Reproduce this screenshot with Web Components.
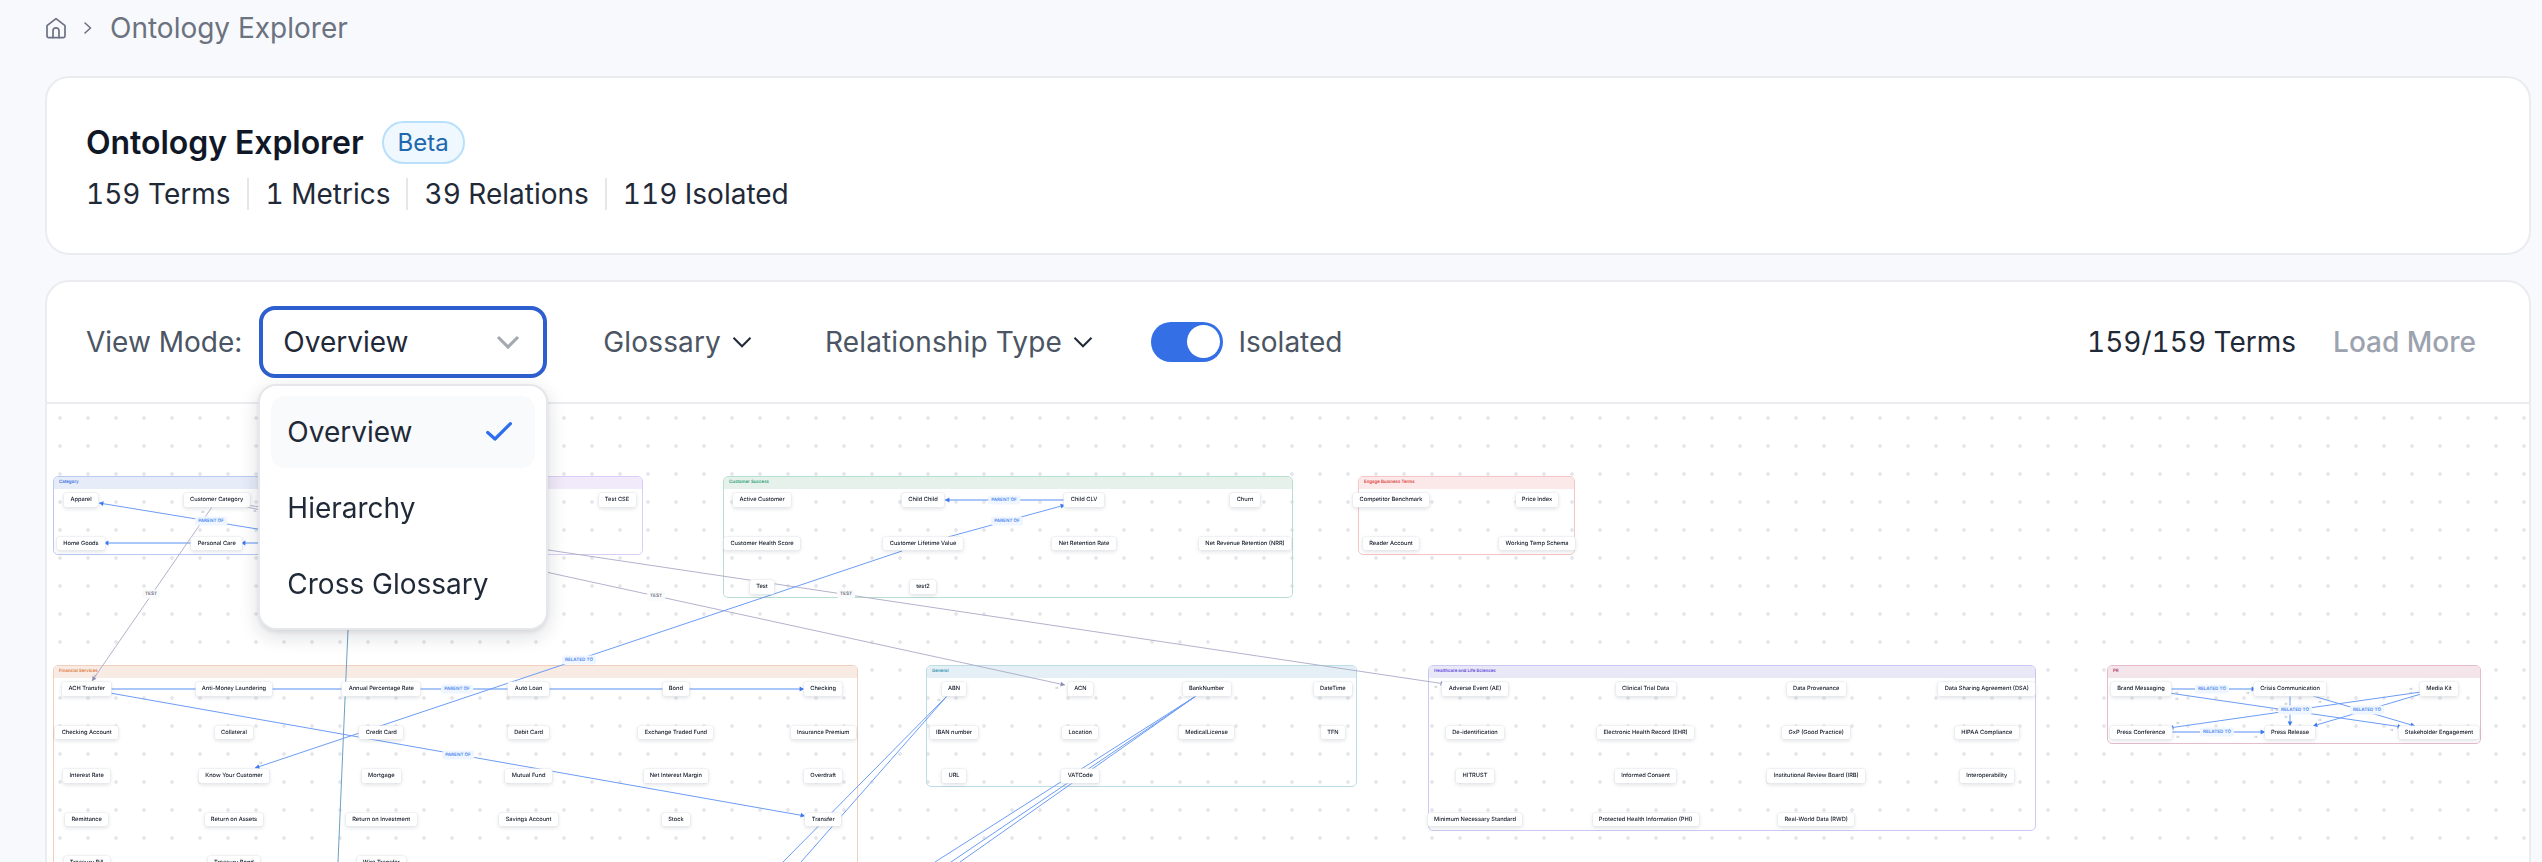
<!DOCTYPE html>
<html>
<head>
<meta charset="utf-8">
<title>Ontology Explorer</title>
<style>
  html, body { margin: 0; height: 862px; overflow: hidden; background: #f8f9fc; }
  body { font-family: Inter, "Liberation Sans", sans-serif; }
</style>
</head>
<body>
<app-shell>
  <bread-crumb label="Ontology Explorer"></bread-crumb>
  <summary-card>
    <span slot="title">Ontology Explorer</span>
    <span slot="badge">Beta</span>
    <stat-item>159 Terms</stat-item>
    <stat-item>1 Metrics</stat-item>
    <stat-item>39 Relations</stat-item>
    <stat-item>119 Isolated</stat-item>
  </summary-card>
  <explorer-card>
    <view-select slot="tools" value="Overview"></view-select>
    <filter-button slot="tools" style="margin-left:56px">Glossary</filter-button>
    <filter-button slot="tools" style="margin-left:66px">Relationship Type</filter-button>
    <toggle-switch slot="tools" style="margin-left:50.6px">Isolated</toggle-switch>
    <ontology-canvas></ontology-canvas>
  </explorer-card>
</app-shell>

<script>
const shell = document.createElement('template');
shell.innerHTML = `
<style>
  :host { display: flex; flex-direction: column; height: 862px; padding: 0 11px 0 45px; box-sizing: border-box; }
</style>
<slot></slot>`;
class AppShell extends HTMLElement {
  constructor() {
    super();
    this.attachShadow({ mode: 'open' }).appendChild(shell.content.cloneNode(true));
  }
}
customElements.define('app-shell', AppShell);

const crumb = document.createElement('template');
crumb.innerHTML = `
<style>
  :host { display: flex; align-items: center; height: 56px; margin-bottom: 20px; color: #6b7280; font-size: 28px; flex: none; }
  svg { display: block; flex: none; }
  .sep { margin: 0 17px 0 16px; }
</style>
<svg width="22" height="22" viewBox="0 0 22 22" fill="none" stroke="#6b7280" stroke-width="1.7" stroke-linejoin="round" stroke-linecap="round">
  <path d="M2 8.6 11 1.6l9 7V19a1.6 1.6 0 0 1-1.6 1.6H3.6A1.6 1.6 0 0 1 2 19z"/>
  <path d="M8 20.6v-6.8a3 3 0 0 1 6 0v6.8"/>
</svg>
<svg class="sep" width="10" height="12" viewBox="0 0 10 12" fill="none" stroke="#6b7280" stroke-width="1.6" stroke-linecap="round" stroke-linejoin="round"><path d="m2 1 5.5 5L2 11"/></svg>
<span></span>`;
class BreadCrumb extends HTMLElement {
  constructor() {
    super();
    this.attachShadow({ mode: 'open' }).appendChild(crumb.content.cloneNode(true));
    this.shadowRoot.querySelector('span').textContent = this.getAttribute('label');
  }
}
customElements.define('bread-crumb', BreadCrumb);

const summary = document.createElement('template');
summary.innerHTML = `
<style>
  :host { display: block; flex: none; background: #fff; border: 2px solid #eaecf0; border-radius: 24px; padding: 42px 39px 43px; height: 179px; box-sizing: border-box; }
  .head { display: flex; align-items: center; height: 44px; margin-bottom: 14px; }
  .title { font-size: 32px; font-weight: 600; color: #101828; letter-spacing: -0.05px; }
  .badge { margin-left: 18px; display: flex; align-items: center; height: 43px; padding: 0 14px; box-sizing: border-box; font-size: 24px; color: #2167ae; background: #eff8ff; border: 2px solid #b9e0fb; border-radius: 22px; }
  .stats { display: flex; height: 32px; align-items: center; }
</style>
<div class="head">
  <div class="title"><slot name="title"></slot></div>
  <div class="badge"><slot name="badge"></slot></div>
</div>
<div class="stats"><slot></slot></div>`;
class SummaryCard extends HTMLElement {
  constructor() {
    super();
    this.attachShadow({ mode: 'open' }).appendChild(summary.content.cloneNode(true));
  }
}
customElements.define('summary-card', SummaryCard);

const stat = document.createElement('template');
stat.innerHTML = `
<style>
  :host { display: flex; align-items: center; height: 32px; padding: 0 16px; font-size: 28px; color: #1f2937; border-left: 2px solid #e5e7eb; font-variant-numeric: tabular-nums; }
  :host(:first-of-type) { padding: 0 17px 0 0; border-left: 0; }
</style>
<slot></slot>`;
class StatItem extends HTMLElement {
  constructor() {
    super();
    this.attachShadow({ mode: 'open' }).appendChild(stat.content.cloneNode(true));
  }
}
customElements.define('stat-item', StatItem);

const explorer = document.createElement('template');
explorer.innerHTML = `
<style>
  :host { display: flex; flex-direction: column; flex: none; height: 640px; margin-top: 25px; background: #fff; border: 2px solid #eaecf0; border-radius: 24px; box-sizing: border-box; }
  .bar { position: relative; z-index: 5; flex: none; display: flex; align-items: center; height: 122px; box-sizing: border-box; padding: 0 53px 1px 39px; border-bottom: 2px solid #eaecf0; font-size: 28px; }
  .lead { color: #4b5563; margin-right: 17px; }
  .count { margin-left: auto; color: #1f2937; font-variant-numeric: tabular-nums; }
  .more { margin-left: 37px; color: #9ca3af; font-weight: 500; }
  .view { flex: none; height: 458px; }
</style>
<div class="bar">
  <span class="lead">View Mode:</span>
  <slot name="tools"></slot>
  <span class="count">159/159 Terms</span>
  <span class="more">Load More</span>
</div>
<div class="view"><slot></slot></div>`;
class ExplorerCard extends HTMLElement {
  constructor() {
    super();
    this.attachShadow({ mode: 'open' }).appendChild(explorer.content.cloneNode(true));
  }
}
customElements.define('explorer-card', ExplorerCard);

const select = document.createElement('template');
select.innerHTML = `
<style>
  :host { display: block; position: relative; flex: none; width: 288px; height: 72px; font-size: 28px; color: #1f2937; }
  .box { display: flex; align-items: center; justify-content: space-between; height: 100%; box-sizing: border-box; padding: 0 15px 0 20px; background: #fff; border: 4px solid #2d5fcf; border-radius: 16px; }
  .box svg { display: block; }
  .menu { position: absolute; left: -1px; top: 78px; width: 290px; height: 246px; box-sizing: border-box; padding: 10px 11px; background: #fff; border: 2px solid #e6e7ea; border-radius: 18px; box-shadow: 0 6px 20px rgba(16,24,40,.14), 0 2px 4px rgba(16,24,40,.08); display: flex; flex-direction: column; gap: 4px; }
  .item { flex: none; display: flex; align-items: center; justify-content: space-between; height: 72px; padding: 0 23px 0 16px; border-radius: 14px; }
  .on { background: #f9fafb; }
</style>
<div class="box">
  <span></span>
  <svg width="40" height="40" viewBox="0 0 24 24" fill="none" stroke="#a3a8b1" stroke-width="1.9"><path d="m6 9 6 6 6-6"/></svg>
</div>
<div class="menu">
  <div class="item on"><span>Overview</span>
    <svg width="26" height="19" viewBox="0 0 26 19" fill="none" stroke="#2f6fed" stroke-width="3.2" stroke-linecap="round" stroke-linejoin="round"><path d="M1.7 10.5 9 17 24.4 1.7"/></svg>
  </div>
  <div class="item"><span>Hierarchy</span></div>
  <div class="item"><span>Cross Glossary</span></div>
</div>`;
class ViewSelect extends HTMLElement {
  constructor() {
    super();
    this.attachShadow({ mode: 'open' }).appendChild(select.content.cloneNode(true));
    this.shadowRoot.querySelector('.box span').textContent = this.getAttribute('value');
  }
}
customElements.define('view-select', ViewSelect);

const filter = document.createElement('template');
filter.innerHTML = `
<style>
  :host { display: flex; align-items: center; flex: none; color: #4b5563; font-size: 28px; gap: 4px; letter-spacing: .15px; }
  svg { display: block; }
</style>
<slot></slot>
<svg width="34" height="34" viewBox="0 0 24 24" fill="none" stroke="#1f2937" stroke-width="1.4"><path d="m6 9 6 6 6-6"/></svg>`;
class FilterButton extends HTMLElement {
  constructor() {
    super();
    this.attachShadow({ mode: 'open' }).appendChild(filter.content.cloneNode(true));
  }
}
customElements.define('filter-button', FilterButton);

const toggle = document.createElement('template');
toggle.innerHTML = `
<style>
  :host { display: flex; align-items: center; flex: none; gap: 16px; color: #4b5563; font-size: 28px; }
  .track { display: flex; justify-content: flex-end; align-items: center; width: 72px; height: 40px; padding: 0 3px; box-sizing: border-box; border-radius: 20px; background: #356fe6; }
  .knob { width: 33px; height: 33px; border-radius: 50%; background: #fff; }
</style>
<div class="track"><div class="knob"></div></div>
<slot></slot>`;
class ToggleSwitch extends HTMLElement {
  constructor() {
    super();
    this.attachShadow({ mode: 'open' }).appendChild(toggle.content.cloneNode(true));
  }
}
customElements.define('toggle-switch', ToggleSwitch);

const node = document.createElement('template');
node.innerHTML = `
<style>
  :host { display: block; position: relative; z-index: 2; justify-self: center; white-space: nowrap; height: 13.4px; line-height: 13.4px; padding: 0 6.3px; box-sizing: border-box; background: #fff; border-radius: 2.2px; font-size: 5.7px; font-weight: 500; color: #111827; box-shadow: 0 0 0 .6px #e8eaee, 0 1.5px 4px rgba(16,24,40,.15); }
</style>
<slot></slot>`;
class TermNode extends HTMLElement {
  constructor() {
    super();
    this.attachShadow({ mode: 'open' }).appendChild(node.content.cloneNode(true));
  }
}
customElements.define('term-node', TermNode);

const group = document.createElement('template');
group.innerHTML = `
<style>
  :host { display: block; position: absolute; box-sizing: border-box; border: 1px solid var(--line); border-radius: 5px; }
  .head { height: 12px; line-height: 12px; padding-left: 5px; background: var(--head); border-radius: 4px 4px 0 0; color: var(--ink); font-size: 4.4px; font-weight: 600; }
  .body { display: grid; grid-template-columns: repeat(var(--cols), 20px); column-gap: calc(var(--step) - 20px); grid-auto-rows: 13.4px; row-gap: 30.1px; padding: 4.3px 0 0 calc(var(--first) - 10px); justify-items: center; }
</style>
<div class="head"></div>
<div class="body"><slot></slot></div>`;
class TermGroup extends HTMLElement {
  constructor() {
    super();
    this.attachShadow({ mode: 'open' }).appendChild(group.content.cloneNode(true));
  }
  set label(text) {
    this.shadowRoot.querySelector('.head').textContent = text;
  }
}
customElements.define('term-group', TermGroup);

const tag = document.createElement('template');
tag.innerHTML = `
<style>
  :host { display: block; position: absolute; z-index: 3; transform: translate(-50%, -50%); white-space: nowrap; height: 9px; line-height: 9px; padding: 0 3px; border-radius: 2.5px; background: #eff6ff; color: #4a86f0; font-size: 4.6px; font-weight: 600; }
  :host([kind="test"]) { background: #f9fafb; color: #6b7280; }
  :host([kind="m"]) { background: none; color: #9ca3af; font-size: 3.2px; font-weight: 400; padding: 0; z-index: 1; }
</style>
<slot></slot>`;
class EdgeLabel extends HTMLElement {
  constructor() {
    super();
    this.attachShadow({ mode: 'open' }).appendChild(tag.content.cloneNode(true));
  }
}
customElements.define('edge-label', EdgeLabel);

// canvas origin on the page, all data below is in page pixels
const OX = 47, OY = 404;

const GROUPS = [
  { name: 'Category', x: 53, y: 476, w: 362, h: 79, c: ['#b8caf4', '#e6ecf8', '#3b6fe0'], first: 81, step: 135.7, cols: 3,
    terms: ['Apparel', 'Customer Category', '', 'Home Goods', 'Personal Care', ''] },
  { name: '', x: 418, y: 476, w: 225, h: 79, c: ['#dccdf6', '#f0eafa', '#7c4fe0'], first: 617, step: 135.7, cols: 1,
    terms: ['Test CSE'] },
  { name: 'Customer Success', x: 723, y: 476, w: 570, h: 122, c: ['#b7dfd0', '#e6f1ec', '#2f9e7a'], first: 762, step: 161, cols: 4,
    terms: ['Active Customer', 'Child Child', 'Child CLV', 'Churn', 'Customer Health Score', 'Customer Lifetime Value', 'Net Retention Rate', 'Net Revenue Retention (NRR)', 'Test', 'test2'] },
  { name: 'Engage Business Terms', x: 1358, y: 476, w: 217, h: 79, c: ['#f6c6c6', '#fbe9e9', '#e0413a'], first: 1391, step: 146, cols: 2,
    terms: ['Competitor Benchmark', 'Price Index', 'Reader Account', 'Working Temp Schema'] },
  { name: 'Financial Services', x: 53, y: 665, w: 805, h: 240, c: ['#f0cfbc', '#f8ebe4', '#e0763a'], first: 86.7, step: 147.3, cols: 6,
    terms: ['ACH Transfer', 'Anti-Money Laundering', 'Annual Percentage Rate', 'Auto Loan', 'Bond', 'Checking',
      'Checking Account', 'Collateral', 'Credit Card', 'Debit Card', 'Exchange Traded Fund', 'Insurance Premium',
      'Interest Rate', 'Know Your Customer', 'Mortgage', 'Mutual Fund', 'Net Interest Margin', 'Overdraft',
      'Remittance', 'Return on Assets', 'Return on Investment', 'Savings Account', 'Stock', 'Transfer',
      'Treasury Bill', 'Treasury Bond', 'Wire Transfer'] },
  { name: 'General', x: 926, y: 665, w: 431, h: 122, c: ['#bcdce7', '#e4f0f5', '#2f93ae'], first: 954, step: 126.3, cols: 4,
    terms: ['ABN', 'ACN', 'BankNumber', 'DateTime', 'IBAN number', 'Location', 'MedicalLicense', 'TFN', 'URL', 'VATCode'] },
  { name: 'Healthcare and Life Sciences', x: 1428, y: 665, w: 608, h: 166, c: ['#cbc8f3', '#e9e8f7', '#5b46e0'], first: 1475, step: 170.6, cols: 4,
    terms: ['Adverse Event (AE)', 'Clinical Trial Data', 'Data Provenance', 'Data Sharing Agreement (DSA)', 'De-identification', 'Electronic Health Record (EHR)', 'GxP (Good Practice)', 'HIPAA Compliance', 'HITRUST', 'Informed Consent', 'Institutional Review Board (IRB)', 'Interoperability', 'Minimum Necessary Standard', 'Protected Health Information (PHI)', 'Real-World Data (RWD)'] },
  { name: 'PR', x: 2107, y: 665, w: 374, h: 79, c: ['#e5bccb', '#f3e5ea', '#b0376a'], first: 2141, step: 149, cols: 3,
    terms: ['Brand Messaging', 'Crisis Communication', 'Media Kit', 'Press Conference', 'Press Release', 'Stakeholder Engagement'] }
];

// x1 y1 x2 y2 kind arrow
const EDGES = [
  [300, 536, 99, 503, 'b', 1], [420, 543, 241, 543, 't', 1], [192, 543, 104, 543, 't', 1],
  [212, 507, 92, 681, 'g', 1], [247, 505, 1445, 684, 'g', 1], [247, 507, 1065, 685, 'g', 1],
  [351, 560, 338, 862, 'v', 0],
  [110, 689, 804, 689, 't', 1], [110, 693, 805, 816, 'b', 1],
  [902, 551, 255, 768, 'b', 1], [948, 537, 1065, 505, 'b', 1], [1065, 500, 945, 500, 't', 1],
  [947, 696, 783, 862, 'b', 0], [947, 696, 801, 862, 'b', 0],
  [1196, 696, 935, 862, 'b', 0], [1196, 696, 951, 862, 'b', 0], [1196, 696, 960, 862, 'b', 0],
  [2169, 689, 2256, 689, 't', 1], [2169, 693, 2402, 727, 'b', 1], [2290, 696, 2290, 726, 'b', 1],
  [2313, 696, 2415, 726, 'b', 1], [2421, 692, 2169, 728, 'b', 1], [2421, 694, 2313, 726, 'b', 1],
  [2170, 732, 2265, 732, 't', 1]
];

const LABELS = [
  ['PARENT OF', 211, 521], ['TEST', 151, 594, 'test'], ['TEST', 656, 596, 'test'], ['TEST', 846, 594, 'test'],
  ['RELATED TO', 579, 660], ['PARENT OF', 457, 689], ['PARENT OF', 458, 755],
  ['PARENT OF', 1004, 500], ['PARENT OF', 1007, 521],
  ['RELATED TO', 2212, 689], ['RELATED TO', 2295, 710], ['RELATED TO', 2367, 710], ['RELATED TO', 2217, 732]
];

const MARKS = [
  [203, 512], [255, 511], [95, 676], [261, 763], [939, 700], [1057, 688], [1436, 687],
  [2177, 693], [2177, 699], [2248, 693], [2272, 710], [2277, 710], [2286, 704], [2286, 717],
  [2320, 702], [2320, 720], [2411, 689], [2411, 693], [2178, 723], [2392, 730], [2178, 737], [2256, 737]
];

const COLORS = { b: ['#6c9cf5', 1], t: ['#8fb5f8', 1.5], g: ['#aaa9c6', .9], v: ['#6ba0c4', 1] };

const canvasTpl = document.createElement('template');
canvasTpl.innerHTML = `
<style>
  :host { display: block; position: relative; height: 458px; overflow: hidden; }
  .paper { position: absolute; inset: 0; filter: blur(.3px); background-image: radial-gradient(circle, #e6e8ed 1.8px, transparent 2.1px); background-size: 28px 28px; background-position: -1px 0; font-family: Inter, "Liberation Sans", sans-serif; text-rendering: geometricPrecision; }
  svg { position: absolute; left: 0; top: 0; z-index: 1; }
</style>
<div class="paper"></div>`;

class OntologyCanvas extends HTMLElement {
  constructor() {
    super();
    this.attachShadow({ mode: 'open' }).appendChild(canvasTpl.content.cloneNode(true));
    const paper = this.shadowRoot.querySelector('.paper');

    GROUPS.forEach((g) => {
      const el = document.createElement('term-group');
      el.label = g.name;
      el.style.cssText = `left:${g.x - OX}px;top:${g.y - OY}px;width:${g.w}px;height:${g.h}px;` +
        `--line:${g.c[0]};--head:${g.c[1]};--ink:${g.c[2]};--cols:${g.cols};--step:${g.step}px;--first:${g.first - g.x - 1}px`;
      g.terms.forEach((t) => {
        const n = document.createElement(t ? 'term-node' : 'div');
        n.textContent = t;
        el.appendChild(n);
      });
      paper.appendChild(el);
    });

    let lines = '';
    EDGES.forEach(([x1, y1, x2, y2, k, a]) => {
      const [c, w] = COLORS[k];
      lines += `<line x1="${x1 - OX}" y1="${y1 - OY}" x2="${x2 - OX}" y2="${y2 - OY}" stroke="${c}" stroke-width="${w}"/>`;
      if (a) {
        const t = Math.atan2(y2 - y1, x2 - x1) * 180 / Math.PI;
        const fill = k === 'g' ? '#8f8eb4' : '#3f7cf0';
        lines += `<path d="M0 0-4.4-2.4-4.4 2.4z" fill="${fill}" transform="translate(${x2 - OX} ${y2 - OY}) rotate(${t})"/>`;
      }
    });
    paper.insertAdjacentHTML('beforeend', `<svg width="2495" height="458" viewBox="0 0 2495 458" fill="none">${lines}</svg>`);

    LABELS.forEach(([text, x, y, kind]) => {
      const l = document.createElement('edge-label');
      if (kind) l.setAttribute('kind', kind);
      l.textContent = text;
      l.style.left = `${x - OX}px`;
      l.style.top = `${y - OY}px`;
      paper.appendChild(l);
    });
    MARKS.forEach(([x, y]) => {
      const l = document.createElement('edge-label');
      l.setAttribute('kind', 'm');
      l.textContent = 'M';
      l.style.left = `${x - OX}px`;
      l.style.top = `${y - OY}px`;
      paper.appendChild(l);
    });
  }
}
customElements.define('ontology-canvas', OntologyCanvas);
</script>
</body>
</html>
